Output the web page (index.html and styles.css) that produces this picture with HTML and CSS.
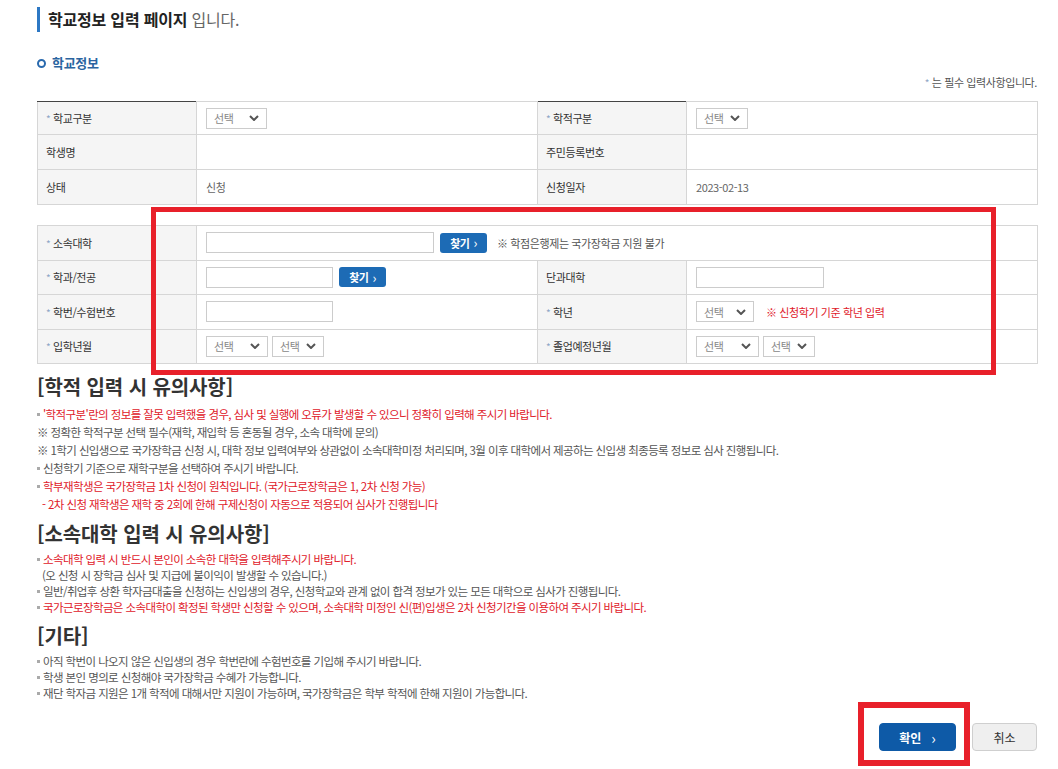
FILE: index.html
```html
<!DOCTYPE html>
<html lang="ko">
<head>
<meta charset="utf-8">
<title>학교정보 입력</title>
<link rel="stylesheet" href="styles.css">
</head>
<body>
<div class="page">
  <h2 class="page-title"><strong>학교정보 입력 페이지</strong> 입니다.</h2>
  <h3 class="sub-title"><span class="ring"></span>학교정보</h3>
  <p class="req-note"><span class="star">*</span> 는 필수 입력사항입니다.</p>

  <table class="form-table top">
    <colgroup><col class="c1"><col class="c2"><col class="c3"><col class="c4"></colgroup>
    <tr>
      <th><span class="star">*</span> 학교구분</th>
      <td><div class="sel w61"><span>선택</span><svg class="chev" viewBox="0 0 10 6"><path d="M1 1l4 4 4-4"/></svg></div></td>
      <th><span class="star">*</span> 학적구분</th>
      <td><div class="sel w52"><span>선택</span><svg class="chev" viewBox="0 0 10 6"><path d="M1 1l4 4 4-4"/></svg></div></td>
    </tr>
    <tr>
      <th>학생명</th><td></td>
      <th>주민등록번호</th><td></td>
    </tr>
    <tr>
      <th>상태</th><td class="val">신청</td>
      <th>신청일자</th><td class="val">2023-02-13</td>
    </tr>
  </table>

  <table class="form-table second">
    <colgroup><col class="c1"><col class="c2"><col class="c3"><col class="c4"></colgroup>
    <tr>
      <th><span class="star">*</span> 소속대학</th>
      <td colspan="3"><div class="field"><span class="inp w228"></span><span class="find">찾기 <b>›</b></span><span class="hint">※ 학점은행제는 국가장학금 지원 불가</span></div></td>
    </tr>
    <tr>
      <th><span class="star">*</span> 학과/전공</th>
      <td><div class="field"><span class="inp w127"></span><span class="find">찾기 <b>›</b></span></div></td>
      <th>단과대학</th>
      <td><span class="inp w128"></span></td>
    </tr>
    <tr>
      <th><span class="star">*</span> 학번/수험번호</th>
      <td><span class="inp w127"></span></td>
      <th><span class="star">*</span> 학년</th>
      <td><div class="field"><div class="sel w58"><span>선택</span><svg class="chev" viewBox="0 0 10 6"><path d="M1 1l4 4 4-4"/></svg></div><span class="red-hint">※ 신청학기 기준 학년 입력</span></div></td>
    </tr>
    <tr>
      <th><span class="star">*</span> 입학년월</th>
      <td><div class="field tight"><div class="sel w62"><span>선택</span><svg class="chev" viewBox="0 0 10 6"><path d="M1 1l4 4 4-4"/></svg></div><div class="sel w52"><span>선택</span><svg class="chev" viewBox="0 0 10 6"><path d="M1 1l4 4 4-4"/></svg></div></div></td>
      <th><span class="star">*</span> 졸업예정년월</th>
      <td><div class="field tight"><div class="sel w63"><span>선택</span><svg class="chev" viewBox="0 0 10 6"><path d="M1 1l4 4 4-4"/></svg></div><div class="sel w52"><span>선택</span><svg class="chev" viewBox="0 0 10 6"><path d="M1 1l4 4 4-4"/></svg></div></div></td>
    </tr>
  </table>

  <section class="notice first">
    <h4 class="notice-title">[학적 입력 시 유의사항]</h4>
    <ul class="notice-list loose">
      <li class="bul red">'학적구분'란의 정보를 잘못 입력했을 경우, 심사 및 실행에 오류가 발생할 수 있으니 정확히 입력해 주시기 바랍니다.</li>
      <li>※ 정확한 학적구분 선택 필수(재학, 재입학 등 혼동될 경우, 소속 대학에 문의)</li>
      <li>※ 1학기 신입생으로 국가장학금 신청 시, 대학 정보 입력여부와 상관없이 소속대학미정 처리되며, 3월 이후 대학에서 제공하는 신입생 최종등록 정보로 심사 진행됩니다.</li>
      <li class="bul">신청학기 기준으로 재학구분을 선택하여 주시기 바랍니다.</li>
      <li class="bul red">학부재학생은 국가장학금 1차 신청이 원칙입니다. (국가근로장학금은 1, 2차 신청 가능)</li>
      <li class="red indent">- 2차 신청 재학생은 재학 중 2회에 한해 구제신청이 자동으로 적용되어 심사가 진행됩니다</li>
    </ul>
  </section>

  <section class="notice">
    <h4 class="notice-title">[소속대학 입력 시 유의사항]</h4>
    <ul class="notice-list">
      <li class="bul red">소속대학 입력 시 반드시 본인이 소속한 대학을 입력해주시기 바랍니다.</li>
      <li class="indent">(오 신청 시 장학금 심사 및 지급에 불이익이 발생할 수 있습니다.)</li>
      <li class="bul">일반/취업후 상환 학자금대출을 신청하는 신입생의 경우, 신청학교와 관계 없이 합격 정보가 있는 모든 대학으로 심사가 진행됩니다.</li>
      <li class="bul red">국가근로장학금은 소속대학이 확정된 학생만 신청할 수 있으며, 소속대학 미정인 신(편)입생은 2차 신청기간을 이용하여 주시기 바랍니다.</li>
    </ul>
  </section>

  <section class="notice">
    <h4 class="notice-title">[기타]</h4>
    <ul class="notice-list">
      <li class="bul">아직 학번이 나오지 않은 신입생의 경우 학번란에 수험번호를 기입해 주시기 바랍니다.</li>
      <li class="bul">학생 본인 명의로 신청해야 국가장학금 수혜가 가능합니다.</li>
      <li class="bul">재단 학자금 지원은 1개 학적에 대해서만 지원이 가능하며, 국가장학금은 학부 학적에 한해 지원이 가능합니다.</li>
    </ul>
  </section>

  <div class="btn-row">
    <button class="btn primary">확인 <b>›</b></button>
    <button class="btn plain">취소</button>
  </div>
</div>

<div class="mark mark-form"></div>
<div class="mark mark-btn"></div>
</body>
</html>
```

FILE: styles.css
```css
* { box-sizing: border-box; }
html, body { margin: 0; padding: 0; background: #fff; }
body {
  font-family: "Noto Sans CJK KR", "Noto Sans", sans-serif;
  color: #333;
  position: relative;
  width: 1058px;
  height: 769px;
  overflow: hidden;
}
.page { padding: 7px 21px 0 37px; }

.page-title {
  margin: 0;
  height: 25px;
  line-height: 25px;
  border-left: 3px solid #2d78c4;
  padding-left: 8px;
  font-size: 16px;
  font-weight: 400;
  color: #666;
  letter-spacing: -0.2px;
}
.page-title strong { color: #222; font-weight: 700; }

.sub-title {
  margin: 23px 0 0;
  display: flex;
  align-items: center;
  gap: 6px;
  font-size: 13px;
  line-height: 16px;
  font-weight: 700;
  color: #2a64a0;
  letter-spacing: -0.3px;
}
.ring {
  width: 9px; height: 9px;
  border: 2.5px solid #2a6aae;
  border-radius: 50%;
  display: inline-block;
}
.req-note {
  margin: 4px 0 0;
  text-align: right;
  font-size: 11px;
  line-height: 14px;
  color: #555;
  letter-spacing: -0.4px;
}
.star { color: #8ea6c6; font-size: 10px; }

.form-table {
  width: 1000px;
  border-collapse: collapse;
  table-layout: fixed;
  font-size: 11px;
  letter-spacing: -0.4px;
}
.form-table .c1 { width: 159px; }
.form-table .c2 { width: 341px; }
.form-table .c3 { width: 149px; }
.form-table .c4 { width: 351px; }
.form-table.top { margin-top: 11px; }
.form-table.second { margin-top: 20px; }
.form-table th, .form-table td {
  border: 1px solid #d6d6d6;
  height: 35px;
  padding: 0 0 0 9px;
  vertical-align: middle;
  text-align: left;
}
.form-table th {
  background: #f5f5f5;
  font-weight: 400;
  color: #333;
  padding-left: 8px;
}
.form-table.top tr:first-child th { border-top: 1px solid #444; }
.form-table.top tr:first-child th, .form-table.top tr:first-child td { height: 33px; }
.form-table td { color: #666; }
.form-table.second th, .form-table.second td { height: 34.5px; }

.field { display: flex; align-items: center; gap: 6px; }
.field.tight { gap: 4px; }

.sel {
  height: 21px;
  border: 1px solid #ccc;
  background: #fff;
  display: flex;
  align-items: center;
  justify-content: space-between;
  padding: 0 7px 0 7px;
  color: #888;
  font-size: 11px;
}
.sel.w61 { width: 61px; }
.sel.w52 { width: 52px; }
.sel.w58 { width: 58px; }
.sel.w62 { width: 62px; }
.sel.w63 { width: 63px; }
.chev { width: 10px; height: 6px; fill: none; stroke: #555; stroke-width: 2; }

.inp {
  display: inline-block;
  height: 21px;
  border: 1px solid #ccc;
  background: #fff;
  vertical-align: middle;
}
.inp.w228 { width: 228px; }
.inp.w127 { width: 127px; }
.inp.w128 { width: 128px; }

.find {
  display: inline-flex;
  align-items: center;
  justify-content: center;
  gap: 4px;
  width: 47px;
  height: 20px;
  background: #1d6bb5;
  color: #fff;
  border-radius: 3px;
  font-weight: 700;
  font-size: 11px;
  letter-spacing: -0.5px;
}
.find b { font-weight: 400; font-size: 13px; line-height: 1; }
.hint { color: #555; margin-left: 4px; }
.red-hint { color: #e0202a; margin-left: 6px; }

.notice { margin-top: 9px; }
.notice.first { margin-top: 11px; }
.notice-title {
  margin: 0;
  font-size: 20px;
  line-height: 24px;
  font-weight: 700;
  color: #333;
  letter-spacing: -0.1px;
}
.notice-list {
  list-style: none;
  margin: 5px 0 0;
  padding: 0;
  font-size: 11.5px;
  line-height: 16px;
  color: #555;
  letter-spacing: -0.6px;
}
.notice-list.loose { line-height: 18px; margin-top: 6px; }
.notice-list li { white-space: nowrap; }
.notice-list li.bul::before {
  content: "";
  display: inline-block;
  width: 3px; height: 3px;
  background: #aaa;
  margin: 0 3px 2px 0;
  vertical-align: middle;
}
.notice-list li.red { color: #e0202a; }
.notice-list li.indent { padding-left: 5px; }

.btn-row {
  display: flex;
  justify-content: flex-end;
  gap: 16px;
  margin-top: 22px;
}
.btn {
  height: 28px;
  border-radius: 4px;
  font-family: inherit;
  font-size: 12px;
  cursor: pointer;
  display: inline-flex;
  align-items: center;
  justify-content: center;
}
.btn.primary {
  width: 77px;
  background: #0e5aa7;
  border: 1px solid #0e5aa7;
  color: #fff;
  font-weight: 700;
  gap: 10px;
}
.btn.primary b { font-weight: 400; font-size: 15px; line-height: 1; }
.btn.plain {
  width: 65px;
  background: #efefef;
  border: 1px solid #cfcfcf;
  color: #333;
}

.mark {
  position: absolute;
  border: 5px solid #e8202a;
  pointer-events: none;
}
.mark-form { left: 151px; top: 207px; width: 845px; height: 168px; }
.mark-btn { left: 858px; top: 702px; width: 112px; height: 64px; border-width: 6px; }
```
